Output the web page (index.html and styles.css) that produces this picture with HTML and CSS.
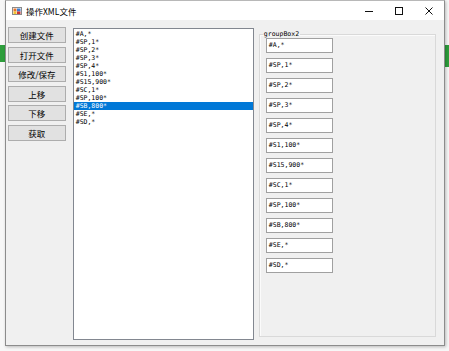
FILE: index.html
```html
<!DOCTYPE html>
<html lang="zh-CN">
<head>
    <meta charset="UTF-8">
    <title>操作XML文件</title>
    <link rel="stylesheet" href="styles.css">
</head>
<body>
    <div class="desk-green desk-left"></div>
    <div class="desk-green desk-right"></div>

    <div class="window">
        <div class="titlebar">
            <svg class="app-icon" width="10" height="10" viewBox="0 0 10 10">
                <rect x="0.5" y="1.5" width="9" height="7" fill="#fff" stroke="#8a8a8a"/>
                <rect x="1.5" y="2.5" width="3" height="3" fill="#e8742c"/>
                <rect x="5" y="2.5" width="3.5" height="3" fill="#3b7fd4"/>
                <rect x="1.5" y="5.5" width="3" height="2.5" fill="#f2c230"/>
                <rect x="5" y="5.5" width="3.5" height="2.5" fill="#c33"/>
            </svg>
            <span class="title">操作XML文件</span>
            <span class="spacer"></span>
            <span class="cap-btn">
                <svg width="10" height="10" viewBox="0 0 10 10"><line x1="1" y1="5.5" x2="9" y2="5.5" stroke="#111"/></svg>
            </span>
            <span class="cap-btn">
                <svg width="10" height="10" viewBox="0 0 10 10"><rect x="1.5" y="1.5" width="7" height="7" fill="none" stroke="#111"/></svg>
            </span>
            <span class="cap-btn">
                <svg width="10" height="10" viewBox="0 0 10 10"><path d="M1.5 1.5 L8.5 8.5 M8.5 1.5 L1.5 8.5" stroke="#111"/></svg>
            </span>
        </div>

        <div class="client">
            <div class="buttons">
                <button>创建文件</button>
                <button>打开文件</button>
                <button>修改/保存</button>
                <button>上移</button>
                <button>下移</button>
                <button>获取</button>
            </div>

            <ul class="listbox">
                <li>#A,*</li>
                <li>#SP,1*</li>
                <li>#SP,2*</li>
                <li>#SP,3*</li>
                <li>#SP,4*</li>
                <li>#S1,100*</li>
                <li>#S15,900*</li>
                <li>#SC,1*</li>
                <li>#SP,100*</li>
                <li class="selected">#SB,800*</li>
                <li>#SE,*</li>
                <li>#SD,*</li>
            </ul>

            <fieldset class="groupbox">
                <legend>groupBox2</legend>
                <div class="fields">
                    <div class="textbox">#A,*</div>
                    <div class="textbox">#SP,1*</div>
                    <div class="textbox">#SP,2*</div>
                    <div class="textbox">#SP,3*</div>
                    <div class="textbox">#SP,4*</div>
                    <div class="textbox">#S1,100*</div>
                    <div class="textbox">#S15,900*</div>
                    <div class="textbox">#SC,1*</div>
                    <div class="textbox">#SP,100*</div>
                    <div class="textbox">#SB,800*</div>
                    <div class="textbox">#SE,*</div>
                    <div class="textbox">#SD,*</div>
                </div>
            </fieldset>
        </div>
    </div>
</body>
</html>
```

FILE: styles.css
```css
body { margin: 0; width: 449px; height: 351px; background: #f7f7f7; position: relative; overflow: hidden; font-family: "Noto Sans CJK SC", sans-serif; }
.desk-green { position: absolute; background: #2e9e3c; }
.desk-left { left: 0; top: 45px; width: 6px; height: 17px; }
.desk-right { right: 0; top: 45px; width: 6px; height: 22px; }

.window { position: relative; margin-left: 5px; width: 440px; height: 346px; box-sizing: border-box; border: 1px solid #8c8c8c; border-top-color: #b8b8b8; background: #f0f0f0; box-shadow: 1px 1px 3px rgba(0,0,0,0.25); display: flex; flex-direction: column; }

.titlebar { height: 19px; background: #fff; display: flex; align-items: center; }
.app-icon { margin-left: 6px; }
.title { margin-left: 4px; font-size: 8.5px; color: #000; }
.spacer { flex: 1; }
.cap-btn { width: 30px; height: 19px; display: flex; align-items: center; justify-content: center; }

.client { flex: 1; display: flex; align-items: flex-start; padding: 7px 8px 0 2px; }

.buttons { width: 58px; display: flex; flex-direction: column; gap: 3.6px; }
.buttons button { height: 16px; padding: 0; background: #e1e1e1; border: 1px solid #adadad; font-family: "Noto Sans CJK SC", sans-serif; font-size: 8.5px; line-height: 14px; color: #000; }

.listbox { margin: 1px 0 0 7px; padding: 1px 0 0; width: 182px; height: 312px; box-sizing: border-box; border: 1px solid #828790; background: #fff; list-style: none; font-family: "DejaVu Sans Mono", monospace; font-size: 6.5px; }
.listbox li { height: 8px; line-height: 8px; padding-left: 2px; color: #000; }
.listbox li.selected { background: #0078d7; color: #fff; }

.groupbox { margin: 3px 0 0 5px; padding: 0 0 0 6px; width: 178px; height: 307px; box-sizing: border-box; min-inline-size: 0; border: 1px solid #d9d9d9; box-shadow: inset 1px 1px 0 #fbfbfb; font-family: "DejaVu Sans Mono", monospace; font-size: 6.5px; }
.groupbox legend { margin-left: -3px; padding: 0 1px; line-height: 8px; color: #000; }

.fields { display: flex; flex-direction: column; gap: 5px; }
.textbox { width: 67px; height: 15px; box-sizing: border-box; border: 1px solid #a0a0a0; background: #fff; padding-left: 2px; line-height: 13px; color: #000; }
```
